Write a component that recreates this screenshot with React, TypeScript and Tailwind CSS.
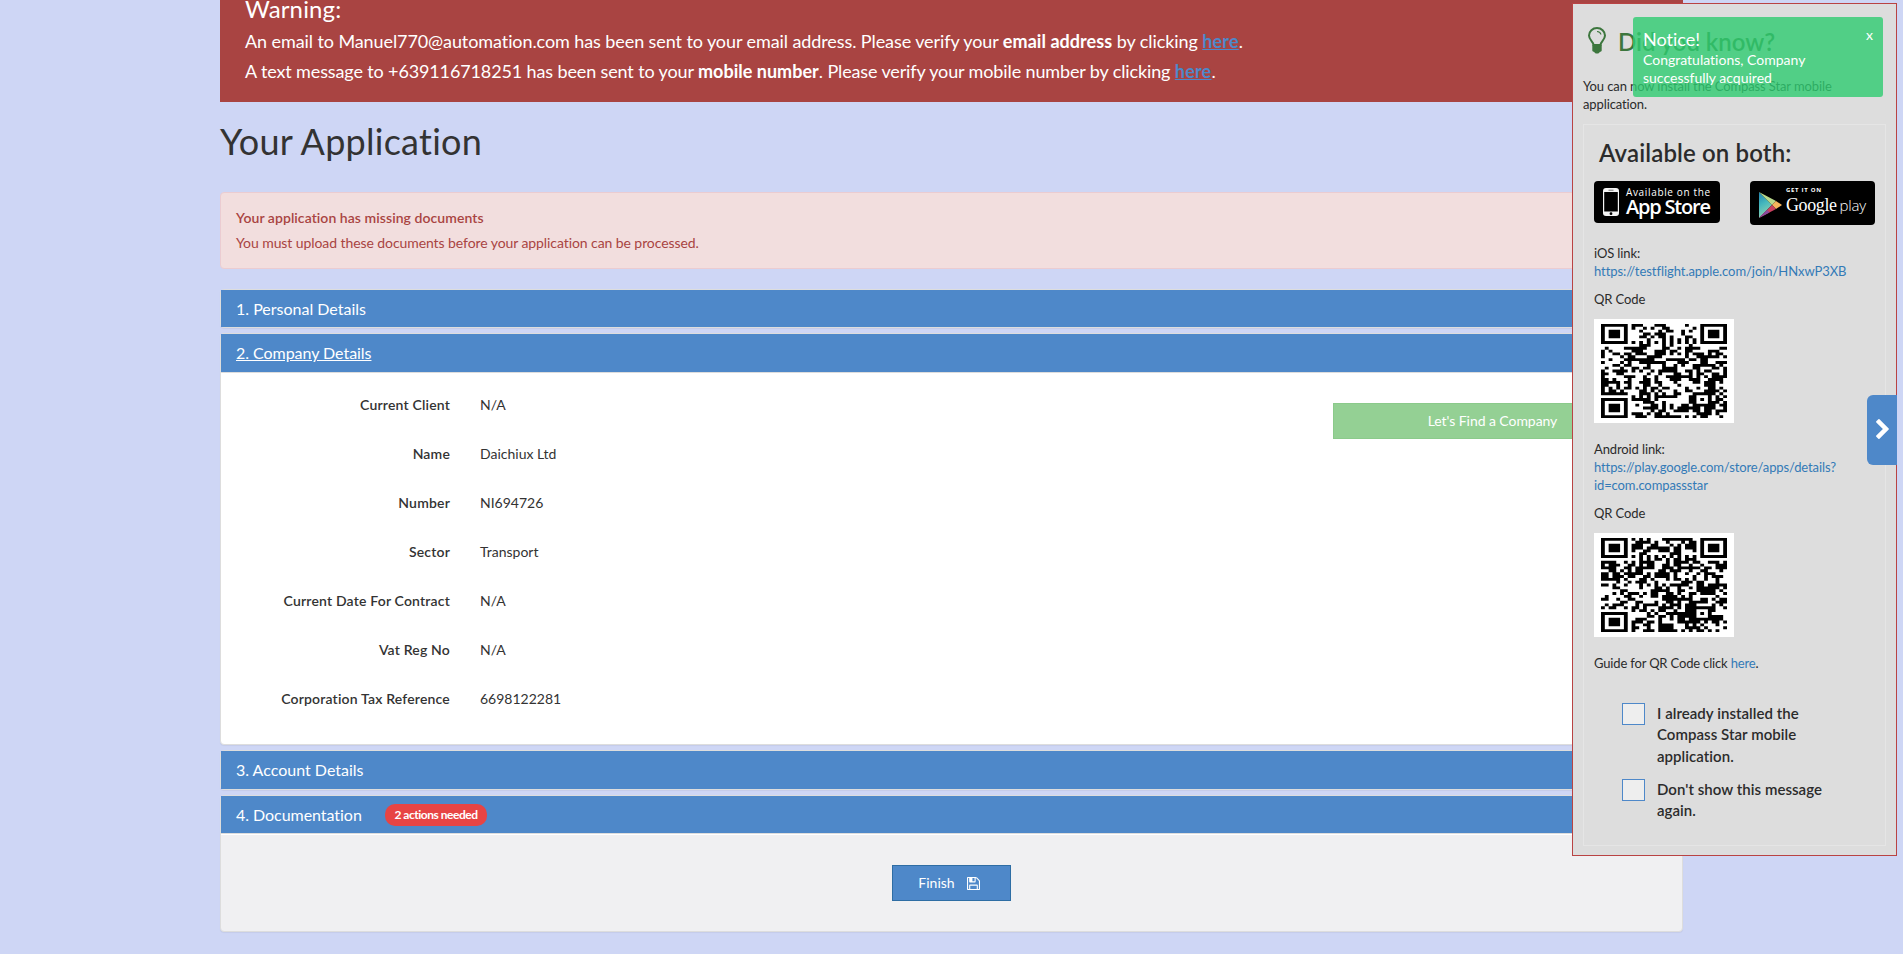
import React from "react";

/* ---------- QR code (version 4, byte mode) ---------- */

type Level = "L" | "M" | "Q";
const LEVELS: Record<Level, { data: number; ec: number; blocks: number; bits: number }> = {
  L: { data: 80, ec: 20, blocks: 1, bits: 1 },
  M: { data: 64, ec: 18, blocks: 2, bits: 0 },
  Q: { data: 48, ec: 26, blocks: 2, bits: 3 },
};
const SIZE = 33;

function gfMul(a: number, b: number): number {
  let r = 0;
  for (let i = 7; i >= 0; i--) {
    r = (r << 1) ^ ((r >>> 7) * 0x11d);
    r ^= ((b >>> i) & 1) * a;
  }
  return r;
}

function eccOf(data: number[], degree: number): number[] {
  const div = new Array(degree).fill(0);
  div[degree - 1] = 1;
  let root = 1;
  for (let i = 0; i < degree; i++) {
    for (let j = 0; j < degree; j++) {
      div[j] = gfMul(div[j], root);
      if (j + 1 < degree) div[j] ^= div[j + 1];
    }
    root = gfMul(root, 2);
  }
  const rem = new Array(degree).fill(0);
  for (const b of data) {
    const f = b ^ rem.shift();
    rem.push(0);
    for (let i = 0; i < degree; i++) rem[i] ^= gfMul(div[i], f);
  }
  return rem;
}

const MASKS: ((x: number, y: number) => boolean)[] = [
  (x, y) => (x + y) % 2 === 0,
  (_x, y) => y % 2 === 0,
  (x) => x % 3 === 0,
  (x, y) => (x + y) % 3 === 0,
  (x, y) => (Math.floor(x / 3) + Math.floor(y / 2)) % 2 === 0,
  (x, y) => ((x * y) % 2) + ((x * y) % 3) === 0,
  (x, y) => (((x * y) % 2) + ((x * y) % 3)) % 2 === 0,
  (x, y) => (((x + y) % 2) + ((x * y) % 3)) % 2 === 0,
];

function buildQr(text: string, level: Level, mask: number): boolean[][] {
  const L = LEVELS[level];
  const bits: number[] = [];
  const push = (v: number, n: number) => {
    for (let i = n - 1; i >= 0; i--) bits.push((v >>> i) & 1);
  };
  push(4, 4);
  push(text.length, 8);
  for (const c of text) push(c.charCodeAt(0), 8);
  push(0, 4);
  while (bits.length % 8) bits.push(0);
  const bytes: number[] = [];
  for (let i = 0; i < bits.length; i += 8) bytes.push(parseInt(bits.slice(i, i + 8).join(""), 2));
  for (let pad = 0xec; bytes.length < L.data; pad ^= 0xec ^ 0x11) bytes.push(pad);
  bytes.length = L.data;

  const per = L.data / L.blocks;
  const blocks = Array.from({ length: L.blocks }, (_, i) => bytes.slice(i * per, (i + 1) * per));
  const eccs = blocks.map((b) => eccOf(b, L.ec));
  const out: number[] = [];
  for (let i = 0; i < per; i++) blocks.forEach((b) => out.push(b[i]));
  for (let i = 0; i < L.ec; i++) eccs.forEach((b) => out.push(b[i]));

  const m: boolean[][] = Array.from({ length: SIZE }, () => new Array(SIZE).fill(false));
  const fn: boolean[][] = Array.from({ length: SIZE }, () => new Array(SIZE).fill(false));
  const set = (x: number, y: number, v: boolean) => {
    m[y][x] = v;
    fn[y][x] = true;
  };
  for (let i = 0; i < SIZE; i++) {
    set(6, i, i % 2 === 0);
    set(i, 6, i % 2 === 0);
  }
  for (const [cx, cy] of [[3, 3], [SIZE - 4, 3], [3, SIZE - 4]])
    for (let dy = -4; dy <= 4; dy++)
      for (let dx = -4; dx <= 4; dx++) {
        const d = Math.max(Math.abs(dx), Math.abs(dy));
        const x = cx + dx;
        const y = cy + dy;
        if (x >= 0 && x < SIZE && y >= 0 && y < SIZE) set(x, y, d !== 2 && d !== 4);
      }
  for (let dy = -2; dy <= 2; dy++)
    for (let dx = -2; dx <= 2; dx++) set(26 + dx, 26 + dy, Math.max(Math.abs(dx), Math.abs(dy)) !== 1);

  const data = (L.bits << 3) | mask;
  let rem = data;
  for (let i = 0; i < 10; i++) rem = (rem << 1) ^ ((rem >>> 9) * 0x537);
  const fmt = ((data << 10) | rem) ^ 0x5412;
  const bit = (i: number) => ((fmt >>> i) & 1) !== 0;
  for (let i = 0; i <= 5; i++) set(8, i, bit(i));
  set(8, 7, bit(6));
  set(8, 8, bit(7));
  set(7, 8, bit(8));
  for (let i = 9; i < 15; i++) set(14 - i, 8, bit(i));
  for (let i = 0; i < 8; i++) set(SIZE - 1 - i, 8, bit(i));
  for (let i = 8; i < 15; i++) set(8, SIZE - 15 + i, bit(i));
  set(8, SIZE - 8, true);

  let k = 0;
  for (let right = SIZE - 1; right >= 1; right -= 2) {
    if (right === 6) right = 5;
    for (let v = 0; v < SIZE; v++)
      for (let j = 0; j < 2; j++) {
        const x = right - j;
        const y = ((right + 1) & 2) === 0 ? SIZE - 1 - v : v;
        if (!fn[y][x]) {
          const on = k < out.length * 8 && ((out[k >>> 3] >>> (7 - (k & 7))) & 1) !== 0;
          m[y][x] = on !== MASKS[mask](x, y);
          k++;
        }
      }
  }
  return m;
}

function QrCode({ text, level, mask }: { text: string; level: Level; mask: number }) {
  const m = buildQr(text, level, mask);
  let d = "";
  m.forEach((row, y) => row.forEach((on, x) => (d += on ? `M${x} ${y}h1v1h-1z` : "")));
  return (
    <div className="h-[104px] w-[140px] bg-white px-[7px] py-[5px]">
      <svg viewBox="0 0 33 33" preserveAspectRatio="none" className="h-[94px] w-[126px]">
        <path d={d} fill="#000" />
      </svg>
    </div>
  );
}

/* ---------- icons ---------- */

const SaveIcon = () => (
  <svg viewBox="0 128 1536 1536" className="h-[13px] w-[13px]" fill="currentColor">
    <path d="M384 1536h768v-384h-768v384zm896 0h128v-896q0-14-10-38.5t-20-34.5l-281-281q-10-10-34-20t-39-10v416q0 40-28 68t-68 28h-576q-40 0-68-28t-28-68v-416h-128v1280h128v-416q0-40 28-68t68-28h832q40 0 68 28t28 68v416zm-384-928v-320q0-13-9.5-22.5t-22.5-9.5h-192q-13 0-22.5 9.5t-9.5 22.5v320q0 13 9.5 22.5t22.5 9.5h192q13 0 22.5-9.5t9.5-22.5zm640 32v928q0 40-28 68t-68 28h-1344q-40 0-68-28t-28-68v-1344q0-40 28-68t68-28h928q40 0 88 20t76 48l280 280q28 28 48 76t20 88z" />
  </svg>
);

const ChevronIcon = () => (
  <svg viewBox="90 -192 1036 1612" className="h-5 w-[13px]" fill="#fff">
    <path d="M1107 659l-742 742q-19 19-45 19t-45-19l-166-166q-19-19-19-45t19-45l531-531-531-531q-19-19-19-45t19-45l166-166q19-19 45-19t45 19l742 742q19 19 19 45t-19 45z" />
  </svg>
);

const BulbIcon = () => (
  <svg viewBox="0 0 18 27" className="h-[27px] w-[18px]" fill="none" stroke="#3c763d">
    <path d="M5.600 18C5.400 14.800 1 13 1 8.600 1 4.200 4.600 1 9 1s8 3.200 8 7.600c0 4.400-4.400 6.200-4.600 9.400z" strokeWidth="2" />
    <path d="M9 4.500c2 0 3.600 1.200 3.900 3" strokeWidth="1.200" />
    <path d="M4.300 17.600h9.400v5.900c0 .8-1 1.200-2 1.400-.4 1-1.400 1.600-2.700 1.600s-2.300-.6-2.700-1.600c-1-.2-2-.6-2-1.400z" fill="#3c763d" stroke="none" />
  </svg>
);

function AppStoreBadge() {
  return (
    <div className="flex h-[42px] w-[126px] items-center rounded-[4px] bg-black pl-[9px]">
      <svg viewBox="0 0 16 28" className="h-7 w-4 shrink-0">
        <rect width="16" height="28" rx="3" fill="#f4f4f4" />
        <rect x="1.200" y="4" width="13.600" height="19.500" fill="#000" />
        <rect x="5.500" y="1.700" width="5" height="1" fill="#777" />
        <circle cx="8" cy="25.700" r="1.400" fill="#000" />
      </svg>
      <div className="ml-[7px] flex flex-col font-['Open_Sans'] text-white">
        <span className="text-[10px] leading-[10px] font-medium tracking-[0.650px] whitespace-nowrap">Available on the</span>
        <span className="text-[20px] leading-[20px] font-semibold tracking-[-1.200px] whitespace-nowrap">App Store</span>
      </div>
    </div>
  );
}

function GooglePlayBadge() {
  return (
    <div className="flex h-11 w-[125px] rounded-[4px] bg-black pt-[11px] pl-[9px]">
      <svg viewBox="0 0 23 26" className="h-[26px] w-[23px] shrink-0">
        <defs>
          <linearGradient id="play" x1="0" y1="0" x2="0.300" y2="1">
            <stop offset="0" stopColor="#1f7fae" />
            <stop offset="0.500" stopColor="#45b8bd" />
            <stop offset="1" stopColor="#8fd0b0" />
          </linearGradient>
        </defs>
        <path d="M0 0l13 13L0 26z" fill="url(#play)" />
        <path d="M0 0l17 9-4 4z" fill="#b9d98c" />
        <path d="M17 9l6 4-6 4-4-4z" fill="#f6b45c" />
        <path d="M0 26l13-13 4 4z" fill="#c9405f" />
        <path d="M0 26l8-8 2.500 2.500z" fill="#8a4a9e" />
      </svg>
      <div className="-mt-[5px] ml-[4px] flex flex-col text-white">
        <span className="font-['Open_Sans'] text-[6px] leading-[7px] font-bold tracking-[0.700px]">GET IT ON</span>
        <span className="flex items-baseline leading-[22px] whitespace-nowrap">
          <span className="font-['Liberation_Serif'] text-[18px] tracking-[-0.400px]">Google</span>
          <span className="ml-[3px] font-['Open_Sans'] text-[15px] font-light tracking-[-0.200px]">play</span>
        </span>
      </div>
    </div>
  );
}

/* ---------- page ---------- */

const DETAILS: [string, string][] = [
  ["Current Client", "N/A"],
  ["Name", "Daichiux Ltd"],
  ["Number", "NI694726"],
  ["Sector", "Transport"],
  ["Current Date For Contract", "N/A"],
  ["Vat Reg No", "N/A"],
  ["Corporation Tax Reference", "6698122281"],
];

function Checkbox({ children }: { children: React.ReactNode }) {
  return (
    <label className="flex items-start">
      <span className="h-[22px] w-[23px] shrink-0 border border-[#4e88c9] bg-[#eee]" />
      <span className="ml-3 w-[170px] text-[15px] leading-[21.430px] font-semibold tracking-[0.050px]">{children}</span>
    </label>
  );
}

function Sidebar() {
  return (
    <aside className="absolute top-[3px] right-[6px] h-[853px] w-[325px] border border-[#b94343] bg-[#ddd] px-[10px] pt-[23px] text-[13px] leading-[18px] tracking-[-0.110px] text-[#2b2b2b]">
      <div className="flex h-[29px] items-start pl-[5px]">
        <BulbIcon />
        <h2 className="ml-[12px] text-[24px] leading-[30px] font-semibold tracking-[-0.050px] text-[#3c763d]">Did you know?</h2>
      </div>
      <p className="mt-[21px]">You can now install the Compass Star mobile application.</p>
      <div className="mt-[11px] h-[722px] border border-[#e5e5e5] px-[10px]">
        <h2 className="mt-[14px] pl-[5px] text-[24px] leading-[28px] font-semibold tracking-[0.130px]">Available on both:</h2>
        <div className="mt-[14px] flex h-[44px] items-start justify-between">
          <AppStoreBadge />
          <GooglePlayBadge />
        </div>
        <p className="mt-[19px]">iOS link:</p>
        <a className="block tracking-[-0.060px] text-[#337ab7]">https://testflight.apple.com/join/HNxwP3XB</a>
        <p className="mt-[10px] mb-[11px]">QR Code</p>
        <QrCode text="https://testflight.apple.com/join/HNxwP3XB" level="Q" mask={5} />
        <p className="mt-[17px]">Android link:</p>
        <a className="block text-[#337ab7]">
          https://play.google.com/store/apps/details?
          <br />
          id=com.compassstar
        </a>
        <p className="mt-[10px] mb-[11px]">QR Code</p>
        <QrCode text="https://play.google.com/store/apps/details?id=com.compassstar" level="L" mask={3} />
        <p className="mt-[17px] tracking-[-0.160px]">
          Guide for QR Code click <a className="text-[#337ab7]">here</a>.
        </p>
        <div className="mt-[31px] flex flex-col gap-[11.700px] pl-[28px]">
          <Checkbox>I already installed the Compass Star mobile application.</Checkbox>
          <Checkbox>Don't show this message again.</Checkbox>
        </div>
      </div>
      <button className="absolute top-[391px] -right-px flex h-[70px] w-[30px] items-center justify-center rounded-l-[6px] bg-[#4e88c9] pb-[2px] pl-[1px]">
        <ChevronIcon />
      </button>
    </aside>
  );
}

function Toast() {
  return (
    <div className="absolute top-[17px] right-[20px] h-[80px] w-[250px] rounded-[3px] bg-[#2ecc71]/80 pt-[11px] pl-[10px] text-white">
      <div className="text-[18px] leading-[23px]">Notice!</div>
      <div className="text-[14px] leading-[18px]">
        Congratulations, Company
        <br />
        successfully acquired
      </div>
      <span className="absolute top-[11px] right-[10px] text-[14px] leading-[14px]">x</span>
    </div>
  );
}

export default function App() {
  return (
    <div className="relative h-[954px] overflow-hidden bg-[#ced6f5] font-[Lato,sans-serif] text-[14px] leading-5 text-[#333] [font-variant-ligatures:none]">
      <main className="mx-auto w-[1463px]">
        <section className="h-[102px] bg-[#a94442] px-[25px] text-white">
          <h3 className="text-[24px] leading-[18px] tracking-[0.150px]">Warning:</h3>
          <div className="pt-[8px] text-[18px] leading-[30px] tracking-[-0.090px]">
            <p>
              An email to Manuel770@automation.com has been sent to your email address. Please verify your{" "}
              <b className="tracking-[0.050px]">email address</b> by clicking{" "}
              <a className="font-bold tracking-[0.200px] text-[#4e88c9] underline">here</a>.
            </p>
            <p className="tracking-[-0.130px]">
              A text message to +639116718251 has been sent to your <b className="tracking-[0.020px]">mobile number</b>. Please
              verify your mobile number by clicking{" "}
              <a className="font-bold tracking-[0.200px] text-[#4e88c9] underline">here</a>.
            </p>
          </div>
        </section>

        <h1 className="mt-[19px] text-[36px] leading-[40px] tracking-[0.250px]">Your Application</h1>

        <section className="mt-[31px] h-[77px] rounded-[4px] border border-[#ebccd1] bg-[#f2dede] px-[15px] py-[15px] text-[#a94442]">
          <p className="font-semibold tracking-[0.060px]">Your application has missing documents</p>
          <p className="mt-[5px] tracking-[-0.080px]">You must upload these documents before your application can be processed.</p>
        </section>

        <div className="mt-5 flex flex-col gap-[5px] text-[16px]">
          <section className="rounded-[4px] border border-[#ddd] shadow-[0_1px_1px_rgba(0,0,0,0.05)]">
            <h4 className="flex h-[37px] items-center bg-[#4e88c9] px-[15px] text-white">1. Personal Details</h4>
          </section>

          <section className="h-[412px] rounded-[4px] border border-[#ddd] bg-white shadow-[0_1px_1px_rgba(0,0,0,0.05)]">
            <h4 className="flex h-[39px] items-center border-b border-[#ddd] bg-[#4e88c9] px-[15px] tracking-[-0.040px] text-white underline">
              2. Company Details
            </h4>
            <div className="flex justify-between pt-[22px] text-[14px]">
              <dl>
                {DETAILS.map(([label, value]) => (
                  <div key={label} className="flex h-[49px] gap-[30px]">
                    <dt className="w-[229px] text-right font-semibold tracking-[0.180px]">{label}</dt>
                    <dd>{value}</dd>
                  </div>
                ))}
              </dl>
              <button className="mt-[8px] mr-[30px] h-[36px] w-[319px] border border-[#8bca8b] bg-[#94d094] tracking-[-0.060px] text-white">
                Let's Find a Company
              </button>
            </div>
          </section>

          <section className="rounded-[4px] border border-[#ddd] shadow-[0_1px_1px_rgba(0,0,0,0.05)]">
            <h4 className="flex h-[38px] items-center bg-[#4e88c9] px-[15px] text-white">3. Account Details</h4>
          </section>

          <section className="h-[137px] rounded-[4px] border border-[#ddd] bg-[#f0f0f2] shadow-[0_1px_1px_rgba(0,0,0,0.05)]">
            <h4 className="flex h-[38px] items-center border-b border-[#ddd] bg-[#4e88c9] px-[15px] text-white">
              <span className="w-[126px] tracking-[-0.040px] whitespace-nowrap">4. Documentation</span>
              <span className="ml-[23px] flex h-[22px] w-[102px] items-center justify-center rounded-[10px] bg-[#e74444] text-[12px] font-bold tracking-[-0.470px]">
                2 actions needed
              </span>
            </h4>
            <div className="flex justify-center border-t border-white pt-[30px] text-[14px]">
              <button className="flex h-[36px] w-[119px] items-center justify-center gap-[12px] border border-[#2e6da4] bg-[#4e88c9] pr-[5px] text-white">
                Finish <SaveIcon />
              </button>
            </div>
          </section>
        </div>
      </main>
      <Sidebar />
      <Toast />
    </div>
  );
}
